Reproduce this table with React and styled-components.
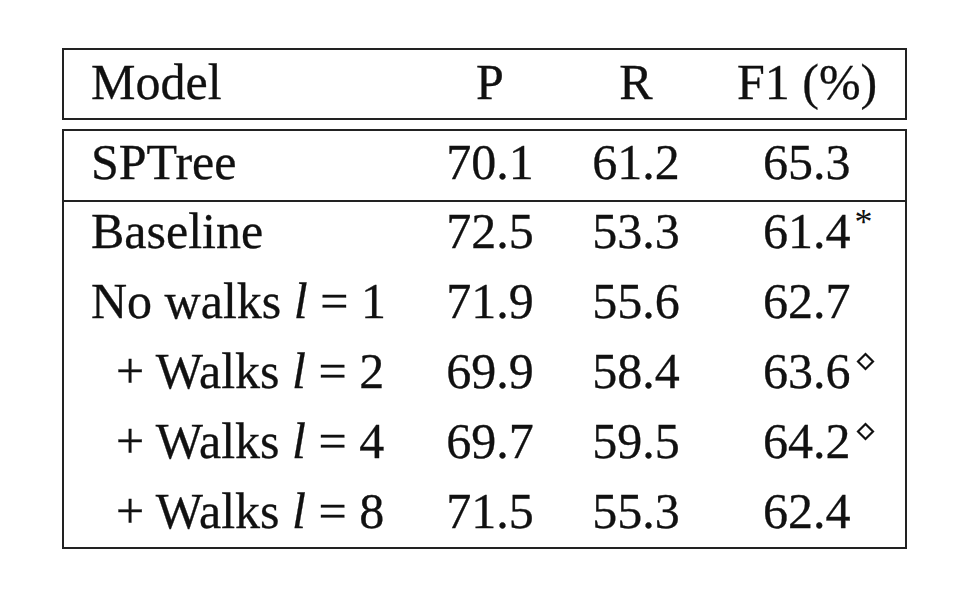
import React from 'react';
import styled, { createGlobalStyle } from 'styled-components';

const GlobalStyle = createGlobalStyle`
    html, body {
        margin: 0;
        padding: 0;
        background: #ffffff;
    }
    body {
        font-family: 'Liberation Serif', 'Times New Roman', serif;
        color: #111111;
    }
`;

const Page = styled.div`
    width: 970px;
    height: 598px;
    box-sizing: border-box;
    padding: 48px 0 0 62px;
`;

const Table = styled.div`
    width: 845px;
    display: flex;
    flex-direction: column;
    gap: 9px;
`;

const Box = styled.div`
    border: 2px solid #222222;
    box-sizing: border-box;
`;

const Section = styled.div`
    display: grid;
    grid-template-columns: 381px 90px 202px 1fr;
    row-gap: ${(props) => props.gap || 0}px;
    padding-bottom: ${(props) => props.pb || 0}px;
    font-size: 50px;
    line-height: ${(props) => props.lh}px;
    -webkit-text-stroke: 0.3px #111111;
    & + & {
        border-top: 2px solid #222222;
    }
`;

const Label = styled.div`
    padding-left: ${(props) => (props.indent ? 52 : 27)}px;
    white-space: nowrap;
`;

const Num = styled.div`
    text-align: center;
    white-space: nowrap;
`;

const F1 = styled.div`
    padding-left: ${(props) => (props.head ? 0 : 26)}px;
    white-space: nowrap;
`;

const Var = styled.i`
    font-style: italic;
`;

const Star = styled.sup`
    font-size: 36px;
    line-height: 0;
    vertical-align: 14px;
    margin-left: 4px;
    -webkit-text-stroke: 0;
`;

const Diamond = styled.svg`
    width: 19px;
    height: 19px;
    vertical-align: 17px;
    margin-left: 5px;
`;

const rows = [
    { label: 'Baseline', p: '72.5', r: '53.3', f: '61.4', mark: 'star' },
    { label: 'No walks', l: 1, p: '71.9', r: '55.6', f: '62.7' },
    { label: '+ Walks', l: 2, indent: true, p: '69.9', r: '58.4', f: '63.6', mark: 'diamond' },
    { label: '+ Walks', l: 4, indent: true, p: '69.7', r: '59.5', f: '64.2', mark: 'diamond' },
    { label: '+ Walks', l: 8, indent: true, p: '71.5', r: '55.3', f: '62.4' },
];

function Row({ row }) {
    return (
        <>
            <Label indent={row.indent}>
                {row.label}
                {row.l && (
                    <>
                        {' '}
                        <Var>l</Var> = {row.l}
                    </>
                )}
            </Label>
            <Num>{row.p}</Num>
            <Num>{row.r}</Num>
            <F1>
                {row.f}
                {row.mark === 'star' && <Star>*</Star>}
                {row.mark === 'diamond' && (
                    <Diamond viewBox="0 0 19 19">
                        <path d="M9.5 2 L17 9.5 L9.5 17 L2 9.5 Z" fill="none" stroke="#111" strokeWidth="2.2" />
                    </Diamond>
                )}
            </F1>
        </>
    );
}

export default function App() {
    return (
        <Page>
            <GlobalStyle />
            <Table>
                <Box>
                    <Section lh={65} pb={3}>
                        <Label>Model</Label>
                        <Num>P</Num>
                        <Num>R</Num>
                        <F1 head>F1 (%)</F1>
                    </Section>
                </Box>
                <Box>
                    <Section lh={63} pb={6}>
                        <Label>SPTree</Label>
                        <Num>70.1</Num>
                        <Num>61.2</Num>
                        <F1>65.3</F1>
                    </Section>
                    <Section lh={58} gap={12} pb={7}>
                        {rows.map((row, i) => (
                            <Row key={i} row={row} />
                        ))}
                    </Section>
                </Box>
            </Table>
        </Page>
    );
}
